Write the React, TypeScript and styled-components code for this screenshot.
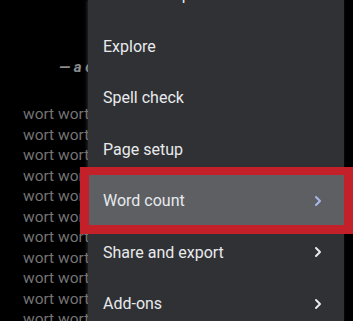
import React from "react";
import styled, { createGlobalStyle } from "styled-components";

const GlobalStyle = createGlobalStyle`
    html, body {
        margin: 0;
        padding: 0;
        background: #000;
        overflow: hidden;
    }
    #root {
        width: 353px;
        height: 321px;
    }
`;

//#region Css
const Screen = styled.div`
    position: relative;
    width: 353px;
    height: 321px;
    overflow: hidden;
    background: #000;
    font-family: Roboto, "Noto Sans", sans-serif;
`;

const Document = styled.div`
    display: flex;
    flex-direction: column;
    width: 65px;
    padding: 57px 0 0 23px;
    overflow: hidden;
    white-space: nowrap;
`;

const Quote = styled.div`
    padding-left: 36px;
    margin-bottom: 27px;
    font-size: 15px;
    font-weight: 700;
    font-style: italic;
    line-height: 20px;
    color: #8d8d8d;
`;

const TextLine = styled.div`
    font-size: 15.5px;
    line-height: 20.5px;
    color: #747474;
`;

const Menu = styled.div`
    position: absolute;
    top: 0;
    left: 88px;
    width: 256px;
    height: 321px;
    background: #303134;
    box-shadow: -1px 0 3px rgba(120, 120, 120, 0.35);
    overflow: hidden;
`;

const MenuList = styled.div`
    display: flex;
    flex-direction: column;
    margin-top: -31px;
`;

const MenuItem = styled.div<{ $active?: boolean }>`
    display: flex;
    align-items: center;
    justify-content: space-between;
    height: 51.5px;
    padding: 0 22px 0 15px;
    font-size: 16px;
    color: #e8eaed;
    background: ${(p) => (p.$active ? "#5d5f63" : "transparent")};
`;

const Chevron = styled.svg<{ $active?: boolean }>`
    width: 8px;
    height: 12px;
    color: ${(p) => (p.$active ? "#a9b9ec" : "#e8eaed")};
`;

const Callout = styled.div`
    position: absolute;
    left: 80px;
    top: 167px;
    width: 273px;
    height: 67px;
    box-sizing: border-box;
    border: 9px solid #c3202a;
    border-top-width: 8px;
`;
//#endregion

const items = [
    { label: "Find and replace", arrow: false },
    { label: "Explore", arrow: false },
    { label: "Spell check", arrow: false },
    { label: "Page setup", arrow: false },
    { label: "Word count", arrow: true, active: true },
    { label: "Share and export", arrow: true },
    { label: "Add-ons", arrow: true },
];

const App = () => {
    return (
        <Screen>
            <GlobalStyle />
            <Document>
                <Quote>— a c</Quote>
                {Array.from({ length: 11 }).map((_, i) => (
                    <TextLine key={i}>wort wort</TextLine>
                ))}
            </Document>
            <Menu>
                <MenuList>
                    {items.map((it) => (
                        <MenuItem key={it.label} $active={it.active}>
                            <span>{it.label}</span>
                            {it.arrow && (
                                <Chevron $active={it.active} viewBox="0 0 8 12">
                                    <polyline
                                        points="2,2 6,6 2,10"
                                        fill="none"
                                        stroke="currentColor"
                                        strokeWidth="2"
                                        strokeLinecap="round"
                                        strokeLinejoin="round"
                                    />
                                </Chevron>
                            )}
                        </MenuItem>
                    ))}
                </MenuList>
            </Menu>
            <Callout />
        </Screen>
    );
};

export default App;
